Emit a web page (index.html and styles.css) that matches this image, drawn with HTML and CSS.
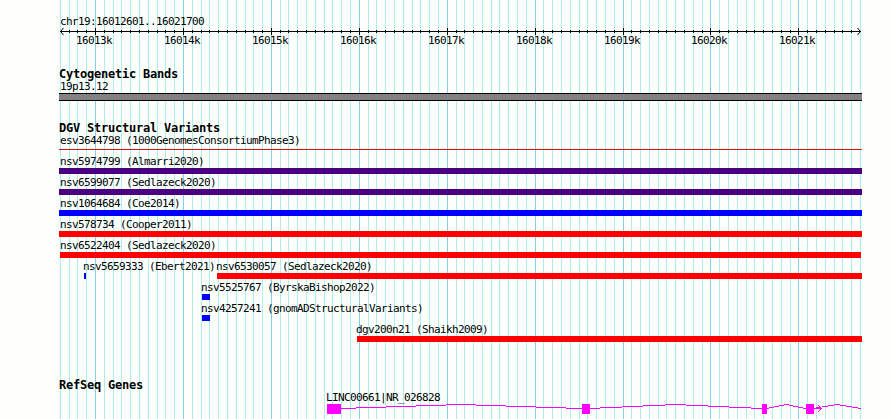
FILE: index.html
```html
<!DOCTYPE html>
<html lang="en">
<head>
  <meta charset="UTF-8">
  <meta name="viewport" content="width=device-width, initial-scale=1.0">
  <title>chr19:16012601..16021700</title>
  <link rel="stylesheet" href="styles.css">
</head>
<body>
  <div class="browser">
    <svg class="grid" id="grid" width="890" height="419" shape-rendering="crispEdges"></svg>

    <div class="ruler">
      <p class="label">chr19:16012601..16021700</p>
      <svg class="scale" id="scale" width="831" height="20">
        <path class="axis" d="M1 3.5H802M4.5 0L1.5 3.5L4.5 7M798.5 0L801.5 3.5L798.5 7"/>
      </svg>
    </div>

    <section class="track cytoband">
      <h2>Cytogenetic Bands</h2>
      <p class="label">19p13.12</p>
      <div class="band"></div>
    </section>

    <section class="track variants">
      <h2>DGV Structural Variants</h2>
      <div class="row"><div class="feature full"><p class="label">esv3644798 (1000GenomesConsortiumPhase3)</p><div class="bar thin"></div></div></div>
      <div class="row"><div class="feature full"><p class="label">nsv5974799 (Almarri2020)</p><div class="bar complex"></div></div></div>
      <div class="row"><div class="feature full"><p class="label">nsv6599077 (Sedlazeck2020)</p><div class="bar complex"></div></div></div>
      <div class="row"><div class="feature full"><p class="label">nsv1064684 (Coe2014)</p><div class="bar gain"></div></div></div>
      <div class="row"><div class="feature full"><p class="label">nsv578734 (Cooper2011)</p><div class="bar loss"></div></div></div>
      <div class="row"><div class="feature full"><p class="label">nsv6522404 (Sedlazeck2020)</p><div class="bar loss inset"></div></div></div>
      <div class="row">
        <div class="feature" style="margin-left: 25px; width: 133px"><p class="label">nsv5659333 (Ebert2021)</p><div class="bar gain" style="width: 2px"></div></div>
        <div class="feature" style="width: 645px"><p class="label">nsv6530057 (Sedlazeck2020)</p><div class="bar loss"></div></div>
      </div>
      <div class="row"><div class="feature" style="margin-left: 143px"><p class="label">nsv5525767 (ByrskaBishop2022)</p><div class="bar gain" style="width: 8px"></div></div></div>
      <div class="row"><div class="feature" style="margin-left: 143px"><p class="label">nsv4257241 (gnomADStructuralVariants)</p><div class="bar gain" style="width: 8px"></div></div></div>
      <div class="row"><div class="feature" style="margin-left: 298px; width: 505px"><p class="label">dgv200n21 (Shaikh2009)</p><div class="bar loss"></div></div></div>
    </section>

    <section class="track genes">
      <h2>RefSeq Genes</h2>
      <div class="gene">
        <p class="label">LINC00661|NR_026828</p>
        <svg class="transcript" width="535" height="10" viewBox="327 0 535 10" shape-rendering="crispEdges">
          <!-- introns -->
          <path class="intron" d="M341 4.5H356M356 3.5H386M386 2.5H416M416 1.5H446M446 .5H476M476 1.5H506M506 2.5H536M536 3.5H566M566 4.5H582"/>
          <path class="intron" d="M590 4.5H600M600 3.5H622M622 2.5H643M643 1.5H665M665 .5H686M686 1.5H708M708 2.5H729M729 3.5H751M751 4.5H762"/>
          <path class="intron" d="M767 4.5H769M769 3.5H774M774 2.5H779M779 1.5H784M784 .5H789M789 1.5H793M793 2.5H798M798 3.5H803M803 4.5H806"/>
          <path class="intron" d="M814 4.5H822M816 3.5H821M822 2.5H828M828 1.5H834M834 .5H840M840 1.5H846M846 2.5H852M852 3.5H858M858 4.5H861"/>
          <!-- strand arrow -->
          <path class="exon" d="M818 1h1v1h-1zM819 2h1v1h-1zM820 3h1v1h-1zM820 5h1v1h-1zM819 6h1v1h-1zM818 7h1v1h-1z"/>
          <!-- exons -->
          <path class="exon" d="M327 0h14v10h-14zM582 0h8v10h-8zM762 0h5v10h-5zM806 0h8v10h-8z"/>
        </svg>
      </div>
    </section>
  </div>

  <script src="script.js"></script>
</body>
</html>
```
FILE: styles.css
```css
* { box-sizing: border-box; }

body {
  margin: 0;
  background-color: #fdfffc;
  color: #000;
  font-family: "DejaVu Sans Mono", monospace;
}

.browser {
  position: relative;
  width: 890px;
  height: 419px;
  padding: 14px 0 0 59px;
  overflow: hidden;
}

/* Vertical guide lines behind all tracks */
.grid {
  position: absolute;
  top: 0;
  left: 0;
  z-index: -1;
}
.grid .minor { fill: #afeeee; }
.grid .major { fill: #87ceeb; }

.label {
  margin: 0;
  height: 14px;
  padding: 1px 0 0 1px;
  font-size: 11px;
  line-height: 14px;
  letter-spacing: -0.622px;
  white-space: nowrap;
}

h2 {
  margin: 0;
  height: 12px;
  font-size: 12px;
  line-height: 12px;
  font-weight: bold;
  letter-spacing: -0.224px;
  white-space: nowrap;
}

/* Ruler */
.ruler { height: 54px; }
.scale { display: block; }
.scale .axis { fill: none; stroke: #000; }
.scale text {
  font-size: 11px;
  letter-spacing: -0.622px;
}

/* Tracks */
.track { width: 803px; }
.cytoband { height: 54px; }
.cytoband .label {
  height: 13px;
  padding-top: 0;
  line-height: 13px;
}
.band {
  height: 8px;
  background-color: #848084;
  border: solid #000;
  border-width: 1px 0;
}

.variants { height: 257px; }
.variants h2 { height: 11px; }
.row {
  display: flex;
  height: 21px;
}
.feature { flex: none; }
.feature .label { margin-left: -2px; }
.full { width: 100%; }
.full .label { margin-left: 0; }
.bar { height: 6px; }
.thin {
  height: 1px;
  margin-top: 2px;
  background-color: #e00c0c;
}
.complex { background-color: #4b0082; }
.gain { background-color: #00f; }
.loss { background-color: #f00; }
.inset { margin: 0 1px; }

/* Gene models */
.gene { padding-left: 268px; }
.gene .label {
  height: 13px;
  margin-left: -1px;
  padding: 0;
}
.transcript { display: block; }
.intron { fill: none; stroke: #f0f; }
.exon { fill: #f0f; }
```
FILE: script.js
```js
(function() {
  const NS = 'http://www.w3.org/2000/svg';
  const grid = document.getElementById('grid');
  const scale = document.getElementById('scale');
  const left = 59;
  const step = 800 / 91; // pixels per 100 bp

  function add(parent, name, attrs) {
    const el = document.createElementNS(NS, name);
    for (const key in attrs) el.setAttribute(key, attrs[key]);
    parent.appendChild(el);
    return el;
  }

  for (let i = 0; i <= 91; i++) {
    const x = Math.round(59.9 + i * step);
    const major = i % 10 === 4;
    add(grid, 'rect', { class: major ? 'major' : 'minor', x: x, y: 0, width: 1, height: 419 });

    if (i > 0 && i < 91) {
      add(scale, 'rect', { x: x - left, y: major ? 0 : 2, width: 1, height: major ? 7 : 3 });
    }
    if (major) {
      const text = add(scale, 'text', { x: x - left - 19, y: 16 });
      text.textContent = (16013 + (i - 4) / 10) + 'k';
    }
  }
})();
```
